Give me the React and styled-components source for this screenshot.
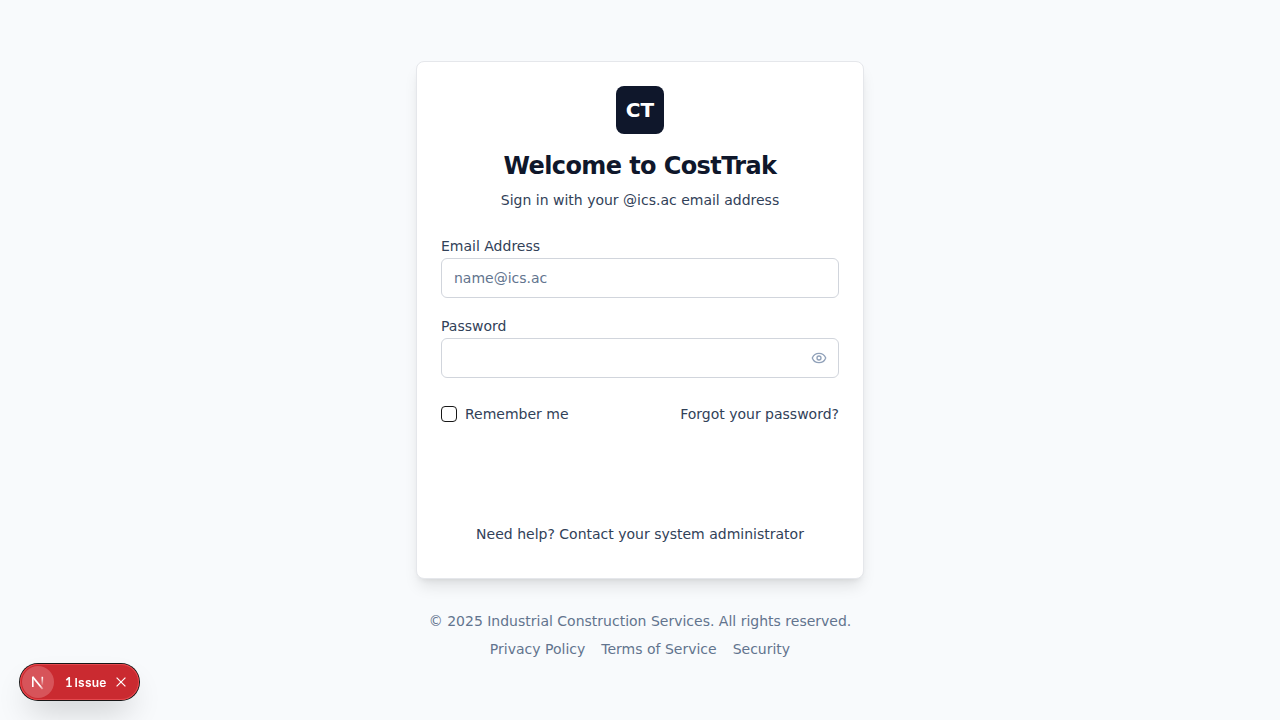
import React from 'react';
import styled, { createGlobalStyle } from 'styled-components';
import { Eye } from 'lucide-react';

const GlobalStyle = createGlobalStyle`
  *, *::before, *::after { box-sizing: border-box; }
  body {
    margin: 0;
    background: #f8fafc;
    color: #0f172b;
    font-family: "DejaVu Sans", sans-serif;
    font-size: 14px;
    line-height: 20px;
  }
  p, h1 { margin: 0; }
`;

const Page = styled.div`
  min-height: 100vh;
  display: flex;
  flex-direction: column;
  align-items: center;
  justify-content: center;
`;

const Column = styled.main`
  width: 448px;
`;

const Card = styled.section`
  border: 1px solid #e5e7eb;
  border-radius: 8px;
  background: #fff;
  box-shadow: 0 10px 15px -3px rgba(0, 0, 0, 0.1), 0 4px 6px -4px rgba(0, 0, 0, 0.1);
`;

const CardHeader = styled.header`
  display: flex;
  flex-direction: column;
  align-items: center;
  padding: 24px;
`;

const Logo = styled.div`
  width: 48px;
  height: 48px;
  margin-bottom: 16px;
  display: flex;
  align-items: center;
  justify-content: center;
  border-radius: 8px;
  background: #0f172b;
  color: #fff;
  font-size: 20px;
  line-height: 28px;
  font-weight: 700;
`;

const Title = styled.h1`
  font-size: 24px;
  line-height: 32px;
  font-weight: 700;
  letter-spacing: -0.6px;
`;

const Subtitle = styled.p`
  margin-top: 8px;
  color: #314158;
`;

const Form = styled.form`
  padding: 0 24px 24px;
`;

const Field = styled.div`
  & + & { margin-top: 16px; }
`;

const Label = styled.label`
  display: block;
  height: 24px;
  padding-top: 2px;
  color: #314158;
`;

const InputFrame = styled.div`
  display: flex;
  align-items: center;
  height: 40px;
  padding-right: 11px;
  border: 1px solid #d1d5dc;
  border-radius: 6px;
  background: #fff;
`;

const Input = styled.input`
  flex: 1;
  min-width: 0;
  height: 100%;
  padding: 0 12px;
  border: 0;
  outline: 0;
  background: transparent;
  color: #0f172b;
  font: inherit;
  &::placeholder { color: #62748e; opacity: 1; }
`;

const IconButton = styled.button`
  display: flex;
  padding: 0;
  border: 0;
  background: none;
  color: #90a1b9;
`;

const Options = styled.div`
  display: flex;
  align-items: center;
  justify-content: space-between;
  height: 24px;
  margin-top: 24px;
  color: #314158;
`;

const Remember = styled.label`
  display: flex;
  align-items: center;
  gap: 8px;
`;

const Checkbox = styled.input`
  appearance: none;
  width: 16px;
  height: 16px;
  margin: 0;
  border: 1px solid #171717;
  border-radius: 4px;
  background: #fff;
`;

const Link = styled.a`
  color: inherit;
  text-decoration: none;
`;

const Help = styled.p`
  margin-top: 98px;
  padding-bottom: 10px;
  text-align: center;
  color: #314158;
`;

const Footer = styled.footer`
  margin-top: 32px;
  text-align: center;
  color: #62748e;
`;

const FooterLinks = styled.nav`
  display: flex;
  justify-content: center;
  gap: 16px;
  margin-top: 8px;
`;

const IssueBadge = styled.aside`
  position: fixed;
  left: 20px;
  bottom: 20px;
  display: flex;
  align-items: center;
  width: 119px;
  height: 36px;
  padding: 2px;
  border-radius: 18px;
  background: #ca2a30;
  color: #fff;
  box-shadow: 0 0 0 1px #171717, inset 0 0 0 1px #e5484d, 0 16px 32px -8px rgba(0, 0, 0, 0.24);
  font: 600 12px/16px Inter, sans-serif;
`;

const FrameworkMark = styled.span`
  display: flex;
  align-items: center;
  justify-content: center;
  width: 32px;
  height: 32px;
  border-radius: 50%;
  background: #d7545a;
`;

const IssueText = styled.span`
  display: flex;
  align-items: baseline;
  gap: 2px;
  width: 42px;
  margin-left: 11px;
  letter-spacing: 0.25px;
  white-space: nowrap;
`;

const IssueCount = styled.span`
  width: 7.5px;
  font-family: Lato, sans-serif;
  font-size: 13px;
  font-weight: 700;
`;

const Dismiss = styled.button`
  display: flex;
  margin: 0 0 0 7px;
  padding: 0;
  border: 0;
  background: none;
  color: #fff;
`;

function NMark() {
  return (
    <svg width="16" height="16" viewBox="0 0 16 16" fill="none">
      <defs>
        <linearGradient id="stem" x1="0" y1="3" x2="0" y2="12" gradientUnits="userSpaceOnUse">
          <stop stopColor="#fff" />
          <stop offset="1" stopColor="#fff" stopOpacity="0" />
        </linearGradient>
        <linearGradient id="diagonal" x1="10" y1="11.5" x2="14" y2="17" gradientUnits="userSpaceOnUse">
          <stop stopColor="#fff" />
          <stop offset="1" stopColor="#fff" stopOpacity="0" />
        </linearGradient>
      </defs>
      <path d="M2.8 13V2.8" stroke="#fff" strokeWidth="1.6" />
      <path d="M2.6 2.8L12.6 15" stroke="url(#diagonal)" strokeWidth="1.8" />
      <path d="M12.3 2.8v8.4" stroke="url(#stem)" strokeWidth="1.6" />
    </svg>
  );
}

export default function App() {
  return (
    <Page>
      <GlobalStyle />
      <Column>
        <Card>
          <CardHeader>
            <Logo>CT</Logo>
            <Title>Welcome to CostTrak</Title>
            <Subtitle>Sign in with your @ics.ac email address</Subtitle>
          </CardHeader>
          <Form>
            <Field>
              <Label htmlFor="email">Email Address</Label>
              <InputFrame>
                <Input id="email" type="email" placeholder="name@ics.ac" />
              </InputFrame>
            </Field>
            <Field>
              <Label htmlFor="password">Password</Label>
              <InputFrame>
                <Input id="password" type="password" />
                <IconButton type="button" aria-label="Show password"><Eye size={16} /></IconButton>
              </InputFrame>
            </Field>
            <Options>
              <Remember><Checkbox type="checkbox" />Remember me</Remember>
              <Link>Forgot your password?</Link>
            </Options>
            <Help>Need help? Contact your system administrator</Help>
          </Form>
        </Card>
        <Footer>
          <p>© 2025 Industrial Construction Services. All rights reserved.</p>
          <FooterLinks>
            <Link>Privacy Policy</Link>
            <Link>Terms of Service</Link>
            <Link>Security</Link>
          </FooterLinks>
        </Footer>
      </Column>
      <IssueBadge>
        <FrameworkMark><NMark /></FrameworkMark>
        <IssueText><IssueCount>1</IssueCount> <span>Issue</span></IssueText>
        <Dismiss aria-label="Dismiss">
          <svg width="14" height="14" viewBox="0 0 14 14" fill="none">
            <path d="M2.6 2.6l8.8 8.8M11.4 2.6l-8.8 8.8" stroke="currentColor" strokeWidth="1.2" />
          </svg>
        </Dismiss>
      </IssueBadge>
    </Page>
  );
}
